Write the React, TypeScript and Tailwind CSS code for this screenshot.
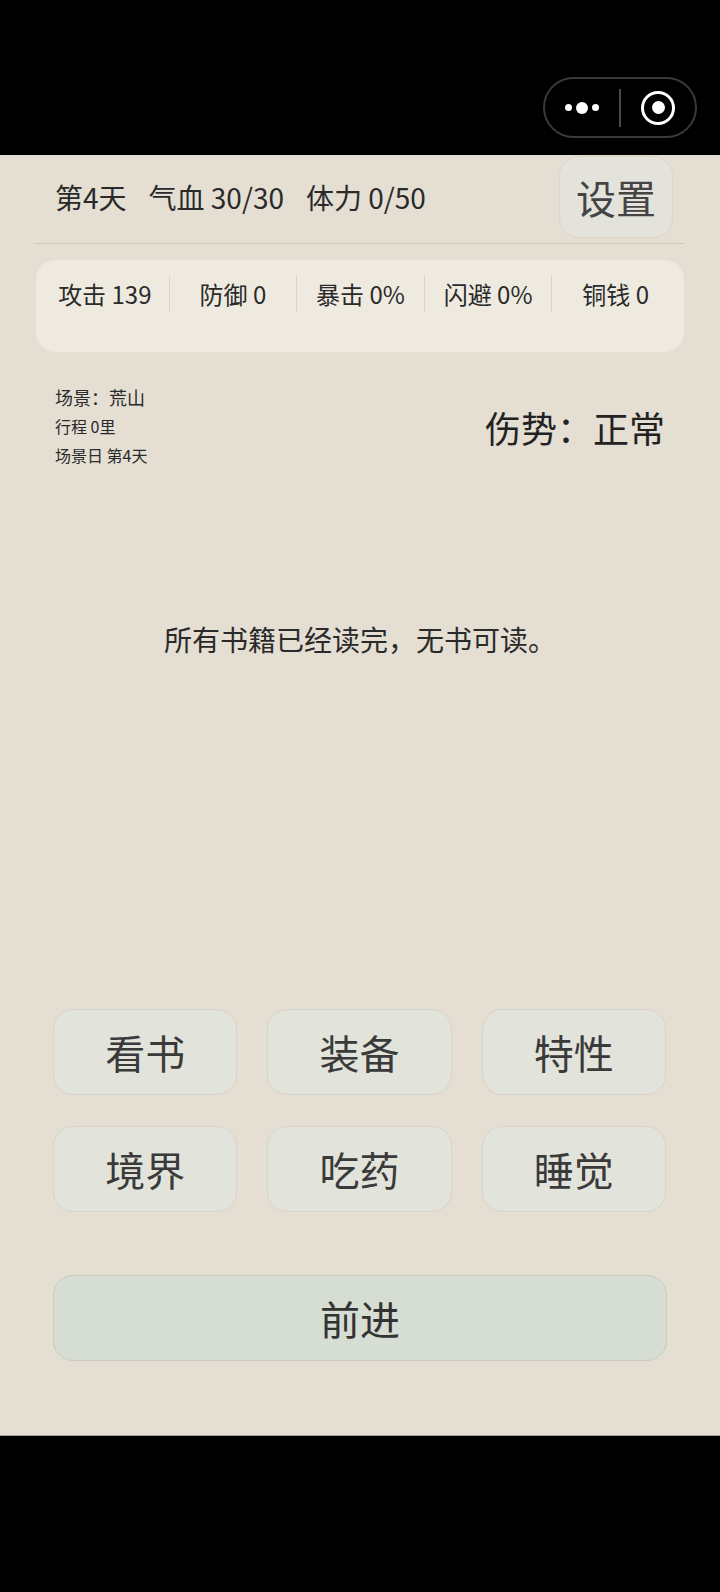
import React from "react";

const font = { fontFamily: '"Noto Sans CJK SC", "Noto Sans", sans-serif' };

function Capsule() {
  return (
    <div className="flex h-[61px] w-[154px] items-center rounded-full border-[2px] border-[#3a3a3a] bg-black">
      <div className="flex w-[74px] items-center justify-center gap-[4px]">
        <span className="block h-[7px] w-[7px] rounded-full bg-white" />
        <span className="block h-[12px] w-[12px] rounded-full bg-white" />
        <span className="block h-[7px] w-[7px] rounded-full bg-white" />
      </div>
      <div className="h-[38px] w-[2px] bg-[#4a4a4a]" />
      <div className="flex flex-1 items-center justify-center">
        <div className="flex h-[34px] w-[34px] items-center justify-center rounded-full border-[3px] border-white">
          <span className="block h-[13px] w-[13px] rounded-full bg-white" />
        </div>
      </div>
    </div>
  );
}

const stats = ["攻击 139", "防御 0", "暴击 0%", "闪避 0%", "铜钱 0"];
const actions = ["看书", "装备", "特性", "境界", "吃药", "睡觉"];

export default function App() {
  return (
    <div className="flex h-[1592px] w-[720px] flex-col bg-black" style={font}>
      <div className="flex h-[155px] items-start justify-end pr-[23px] pt-[77px]">
        <Capsule />
      </div>

      <div className="flex h-[1280px] flex-col bg-[#e4ded3]">
        <div className="flex h-[83px] items-center justify-between pl-[55px] pr-[47px] pt-px">
          <div className="flex items-center gap-[22px] text-[28px] leading-none text-[#2a2a2a]">
            <span>第4天</span>
            <span>气血 30/30</span>
            <span>体力 0/50</span>
          </div>
          <button className="flex h-[82px] w-[114px] items-center justify-center rounded-[20px] border border-[#d9d6cb] bg-[#e3e3dc] text-[40px] leading-none text-[#444444]">
            设置
          </button>
        </div>

        <div className="ml-[35px] mr-[36px] mt-[5px] h-px bg-[#cdc6ba]" />

        <div className="ml-[36px] mr-[36px] mt-[16px] h-[92px] rounded-[20px] bg-[#efeae0] px-[5px] pt-[15px]">
          <div className="grid grid-cols-5">
            {stats.map((s, i) => (
              <div
                key={s}
                className={
                  "flex h-[37px] items-center justify-center text-[24px] leading-none text-[#2a2a2a] " +
                  (i > 0 ? "border-l border-[#dcd6ca]" : "")
                }
              >
                {s}
              </div>
            ))}
          </div>
        </div>

        <div className="mt-[31px] flex items-center justify-between px-[55px]">
          <div className="flex flex-col leading-[29px] text-[#2a2a2a]">
            <span className="text-[18px]">场景：荒山</span>
            <span className="text-[16px]">行程 0里</span>
            <span className="text-[16px]">场景日 第4天</span>
          </div>
          <div className="text-[36px] leading-none text-[#222222]">伤势：正常</div>
        </div>

        <div className="mt-[149px] text-center text-[28px] leading-[40px] text-[#2a2a2a]">
          所有书籍已经读完，无书可读。
        </div>

        <div className="ml-[53px] mt-[350px] grid w-[613px] grid-cols-3 gap-x-[30px] gap-y-[31px]">
          {actions.map((a) => (
            <button
              key={a}
              className="flex h-[86px] items-center justify-center rounded-[20px] border border-[#d7d4c8] bg-[#e2e3db] text-[40px] leading-none text-[#3a3a3a]"
            >
              {a}
            </button>
          ))}
        </div>

        <button className="ml-[53px] mt-[63px] flex h-[86px] w-[614px] items-center justify-center rounded-[20px] border border-[#c9cdc1] bg-[#d6ddd2] text-[40px] leading-none text-[#333333]">
          前进
        </button>
      </div>

      <div className="flex-1 border-t border-[#a8a298] bg-black" />
    </div>
  );
}
